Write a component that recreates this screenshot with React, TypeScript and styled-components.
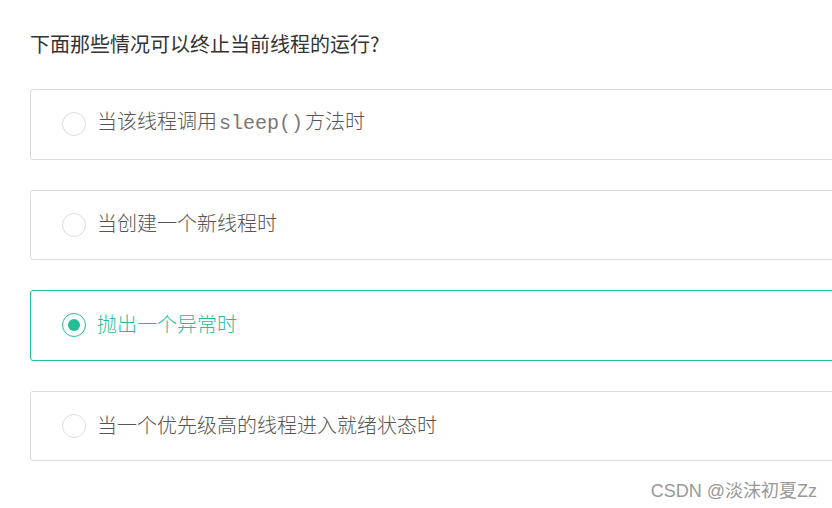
import React from "react";
import styled, { createGlobalStyle } from "styled-components";

const Global = createGlobalStyle`
  html, body { margin: 0; padding: 0; background: #fff; overflow: hidden; }
  body { font-family: "Noto Sans CJK SC", "Noto Sans", sans-serif; }
`;

const Page = styled.div`
  position: relative;
  width: 832px;
  height: 508px;
  padding: 29px 0 0 30px;
  box-sizing: border-box;
`;

const Title = styled.h2`
  margin: 0 0 30px 0;
  font-size: 20px;
  line-height: 30px;
  font-weight: 400;
  color: #333;
`;

const List = styled.div`
  display: flex;
  flex-direction: column;
  gap: 30px;
`;

const Card = styled.div<{ $checked?: boolean }>`
  width: 840px;
  height: 70.6px;
  box-sizing: border-box;
  border: 1px solid ${(p) => (p.$checked ? "#22bf96" : "#dcdcdc")};
  border-radius: 3px;
  display: flex;
  align-items: center;
  padding-left: 31px;
  gap: 11px;
`;

const Radio = styled.span<{ $checked?: boolean }>`
  width: 24px;
  height: 24px;
  box-sizing: border-box;
  border-radius: 50%;
  border: 1px solid ${(p) => (p.$checked ? "#22bf96" : "#dcdcdc")};
  display: flex;
  align-items: center;
  justify-content: center;
  flex: none;
  &::after {
    content: "";
    width: 12px;
    height: 12px;
    border-radius: 50%;
    background: ${(p) => (p.$checked ? "#22bf96" : "transparent")};
  }
`;

const Label = styled.span<{ $checked?: boolean }>`
  font-size: 20px;
  line-height: 28px;
  margin-top: -3px;
  color: ${(p) => (p.$checked ? "#22bf96" : "#555")};
  font-weight: 300;
`;

const Code = styled.span`
  font-family: "Liberation Mono", "Courier New", monospace;
  font-size: 20px;
  font-weight: 400;
  color: #777;
  margin: 0 2px;
`;

const Watermark = styled.div`
  position: absolute;
  right: 15px;
  top: 476px;
  font-size: 18px;
  color: #999;
  font-family: "Liberation Sans", "Noto Sans CJK SC", sans-serif;
`;

const options: { content: React.ReactNode; checked?: boolean }[] = [
  { content: <>当该线程调用<Code>sleep()</Code>方法时</> },
  { content: "当创建一个新线程时" },
  { content: "抛出一个异常时", checked: true },
  { content: "当一个优先级高的线程进入就绪状态时" },
];

export default function App() {
  return (
    <Page>
      <Global />
      <Title>下面那些情况可以终止当前线程的运行?</Title>
      <List>
        {options.map((o, i) => (
          <Card key={i} $checked={o.checked}>
            <Radio $checked={o.checked} />
            <Label $checked={o.checked}>{o.content}</Label>
          </Card>
        ))}
      </List>
      <Watermark>CSDN @淡沫初夏Zz</Watermark>
    </Page>
  );
}
